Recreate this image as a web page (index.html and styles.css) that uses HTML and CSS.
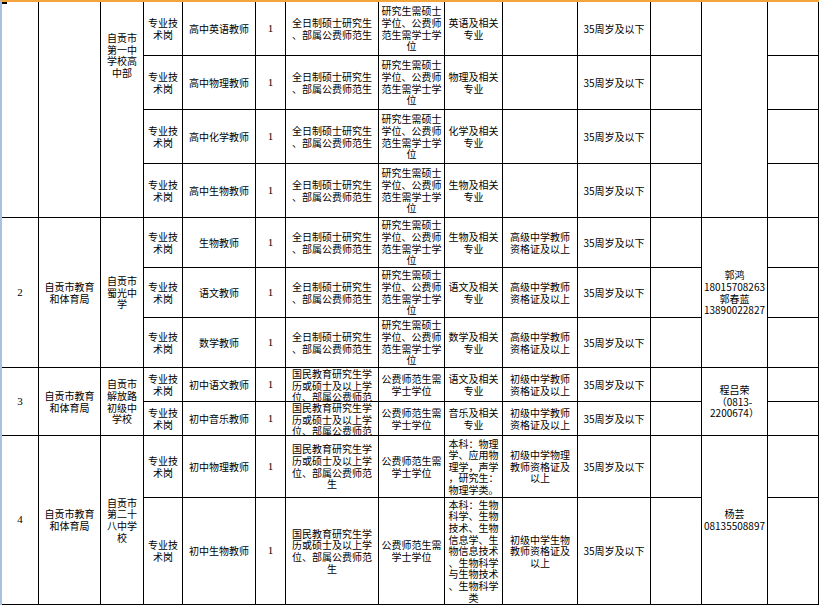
FILE: index.html
```html
<!DOCTYPE html>
<html lang="zh-CN">
<head>
<meta charset="utf-8">
<title>招聘岗位表</title>
<link rel="stylesheet" href="styles.css">
</head>
<body>
<div class="sheet">
  <!-- group 1 -->
  <div class="c r4 mark"></div>
  <div class="c r4"></div>
  <div class="c r4 top"><span class="t">自贡市<br>第一中<br>学校高<br>中部</span></div>
  <div class="c"><span class="t">专业技<br>术岗</span></div>
  <div class="c"><span class="t">高中英语教师</span></div>
  <div class="c num"><span class="t">1</span></div>
  <div class="c"><span class="t">全日制硕士研究生<br>、部属公费师范生</span></div>
  <div class="c"><span class="t">研究生需硕士<br>学位、公费师<br>范生需学士学<br>位</span></div>
  <div class="c"><span class="t">英语及相关<br>专业</span></div>
  <div class="c"></div>
  <div class="c"><span class="t">35周岁及以下</span></div>
  <div class="c"></div>
  <div class="c r4"></div>
  <div class="c"></div>

  <div class="c"><span class="t">专业技<br>术岗</span></div>
  <div class="c"><span class="t">高中物理教师</span></div>
  <div class="c num"><span class="t">1</span></div>
  <div class="c"><span class="t">全日制硕士研究生<br>、部属公费师范生</span></div>
  <div class="c"><span class="t">研究生需硕士<br>学位、公费师<br>范生需学士学<br>位</span></div>
  <div class="c"><span class="t">物理及相关<br>专业</span></div>
  <div class="c"></div>
  <div class="c"><span class="t">35周岁及以下</span></div>
  <div class="c"></div>
  <div class="c"></div>

  <div class="c"><span class="t">专业技<br>术岗</span></div>
  <div class="c"><span class="t">高中化学教师</span></div>
  <div class="c num"><span class="t">1</span></div>
  <div class="c"><span class="t">全日制硕士研究生<br>、部属公费师范生</span></div>
  <div class="c"><span class="t">研究生需硕士<br>学位、公费师<br>范生需学士学<br>位</span></div>
  <div class="c"><span class="t">化学及相关<br>专业</span></div>
  <div class="c"></div>
  <div class="c"><span class="t">35周岁及以下</span></div>
  <div class="c"></div>
  <div class="c"></div>

  <div class="c"><span class="t">专业技<br>术岗</span></div>
  <div class="c"><span class="t">高中生物教师</span></div>
  <div class="c num"><span class="t">1</span></div>
  <div class="c"><span class="t">全日制硕士研究生<br>、部属公费师范生</span></div>
  <div class="c"><span class="t">研究生需硕士<br>学位、公费师<br>范生需学士学<br>位</span></div>
  <div class="c"><span class="t">生物及相关<br>专业</span></div>
  <div class="c"></div>
  <div class="c"><span class="t">35周岁及以下</span></div>
  <div class="c"></div>
  <div class="c"></div>

  <!-- group 2 -->
  <div class="c r3 num"><span class="t">2</span></div>
  <div class="c r3"><span class="t">自贡市教育<br>和体育局</span></div>
  <div class="c r3"><span class="t">自贡市<br>蜀光中<br>学</span></div>
  <div class="c"><span class="t">专业技<br>术岗</span></div>
  <div class="c"><span class="t">生物教师</span></div>
  <div class="c num"><span class="t">1</span></div>
  <div class="c"><span class="t">全日制硕士研究生<br>、部属公费师范生</span></div>
  <div class="c"><span class="t">研究生需硕士<br>学位、公费师<br>范生需学士学<br>位</span></div>
  <div class="c"><span class="t">生物及相关<br>专业</span></div>
  <div class="c"><span class="t">高级中学教师<br>资格证及以上</span></div>
  <div class="c"><span class="t">35周岁及以下</span></div>
  <div class="c"></div>
  <div class="c r3"><span class="t">郭鸿<br>18015708263<br>郭春蓝<br>13890022827</span></div>
  <div class="c"></div>

  <div class="c"><span class="t">专业技<br>术岗</span></div>
  <div class="c"><span class="t">语文教师</span></div>
  <div class="c num"><span class="t">1</span></div>
  <div class="c"><span class="t">全日制硕士研究生<br>、部属公费师范生</span></div>
  <div class="c"><span class="t">研究生需硕士<br>学位、公费师<br>范生需学士学<br>位</span></div>
  <div class="c"><span class="t">语文及相关<br>专业</span></div>
  <div class="c"><span class="t">高级中学教师<br>资格证及以上</span></div>
  <div class="c"><span class="t">35周岁及以下</span></div>
  <div class="c"></div>
  <div class="c"></div>

  <div class="c"><span class="t">专业技<br>术岗</span></div>
  <div class="c"><span class="t">数学教师</span></div>
  <div class="c num"><span class="t">1</span></div>
  <div class="c"><span class="t">全日制硕士研究生<br>、部属公费师范生</span></div>
  <div class="c"><span class="t">研究生需硕士<br>学位、公费师<br>范生需学士学<br>位</span></div>
  <div class="c"><span class="t">数学及相关<br>专业</span></div>
  <div class="c"><span class="t">高级中学教师<br>资格证及以上</span></div>
  <div class="c"><span class="t">35周岁及以下</span></div>
  <div class="c"></div>
  <div class="c"></div>

  <!-- group 3 -->
  <div class="c r2 num"><span class="t">3</span></div>
  <div class="c r2"><span class="t">自贡市教育<br>和体育局</span></div>
  <div class="c r2"><span class="t">自贡市<br>解放路<br>初级中<br>学校</span></div>
  <div class="c"><span class="t">专业技<br>术岗</span></div>
  <div class="c"><span class="t">初中语文教师</span></div>
  <div class="c num"><span class="t">1</span></div>
  <div class="c"><span class="t">国民教育研究生学<br>历或硕士及以上学<br>位、部属公费师范<br>生</span></div>
  <div class="c"><span class="t">公费师范生需<br>学士学位</span></div>
  <div class="c"><span class="t">语文及相关<br>专业</span></div>
  <div class="c"><span class="t">初级中学教师<br>资格证及以上</span></div>
  <div class="c"><span class="t">35周岁及以下</span></div>
  <div class="c"></div>
  <div class="c r2"><span class="t">程吕荣<br>（0813-<br>2200674）</span></div>
  <div class="c"></div>

  <div class="c"><span class="t">专业技<br>术岗</span></div>
  <div class="c"><span class="t">初中音乐教师</span></div>
  <div class="c num"><span class="t">1</span></div>
  <div class="c"><span class="t">国民教育研究生学<br>历或硕士及以上学<br>位、部属公费师范<br>生</span></div>
  <div class="c"><span class="t">公费师范生需<br>学士学位</span></div>
  <div class="c"><span class="t">音乐及相关<br>专业</span></div>
  <div class="c"><span class="t">初级中学教师<br>资格证及以上</span></div>
  <div class="c"><span class="t">35周岁及以下</span></div>
  <div class="c"></div>
  <div class="c"></div>

  <!-- group 4 -->
  <div class="c r2 num"><span class="t">4</span></div>
  <div class="c r2"><span class="t">自贡市教育<br>和体育局</span></div>
  <div class="c r2"><span class="t">自贡市<br>第二十<br>八中学<br>校</span></div>
  <div class="c"><span class="t">专业技<br>术岗</span></div>
  <div class="c"><span class="t">初中物理教师</span></div>
  <div class="c num"><span class="t">1</span></div>
  <div class="c"><span class="t">国民教育研究生学<br>历或硕士及以上学<br>位、部属公费师范<br>生</span></div>
  <div class="c"><span class="t">公费师范生需<br>学士学位</span></div>
  <div class="c"><span class="t">本科：物理<br>学、应用物<br>理学，声学<br>，研究生：<br>物理学类。</span></div>
  <div class="c"><span class="t">初级中学物理<br>教师资格证及<br>以上</span></div>
  <div class="c"><span class="t">35周岁及以下</span></div>
  <div class="c"></div>
  <div class="c r2"><span class="t">杨芸<br>08135508897</span></div>
  <div class="c"></div>

  <div class="c"><span class="t">专业技<br>术岗</span></div>
  <div class="c"><span class="t">初中生物教师</span></div>
  <div class="c num"><span class="t">1</span></div>
  <div class="c"><span class="t">国民教育研究生学<br>历或硕士及以上学<br>位、部属公费师范<br>生</span></div>
  <div class="c"><span class="t">公费师范生需<br>学士学位</span></div>
  <div class="c"><span class="t">本科：生物<br>科学、生物<br>技术、生物<br>信息学、生<br>物信息技术<br>、生物科学<br>与生物技术<br>、生物科学<br>类</span></div>
  <div class="c"><span class="t">初级中学生物<br>教师资格证及<br>以上</span></div>
  <div class="c"><span class="t">35周岁及以下</span></div>
  <div class="c"></div>
  <div class="c"></div>
</div>
</body>
</html>
```
FILE: styles.css
```css
html, body {
  margin: 0;
  padding: 0;
  background: #ffffff;
}

body {
  width: 819px;
  height: 606px;
  overflow: hidden;
  font-family: "Noto Sans CJK SC", "Liberation Sans", sans-serif;
  font-size: 10px;
  line-height: 11.6px;
  color: #000000;
}

.sheet {
  display: grid;
  grid-template-columns: 36px 61px 42px 38px 72px 29px 92px 65px 57px 74px 72px 50px 65px 50px;
  grid-template-rows: 53px 53px 53px 53px 49px 49px 49px 33px 33px 61px 106px;
  gap: 1px;
  width: max-content;
  padding: 0 1px 1px 0;
  background: #000000;
  border-top: 2px solid #f3a43a;
  border-left: 2px solid #a7c1e0;
}

.c {
  display: flex;
  background: #ffffff;
  overflow: hidden;
  white-space: nowrap;
  text-align: center;
  min-width: 0;
  min-height: 0;
}

.c > .t {
  margin: auto;
}

.r4 { grid-row: span 4; }
.r3 { grid-row: span 3; }
.r2 { grid-row: span 2; }

.top > .t {
  margin: 30px auto auto;
}

.num {
  font-family: "Liberation Serif", serif;
  font-size: 11px;
}

.mark {
  position: relative;
}

.mark::before {
  content: "";
  position: absolute;
  left: 0;
  top: 0;
  width: 5px;
  height: 2px;
  background: #000000;
}
```
